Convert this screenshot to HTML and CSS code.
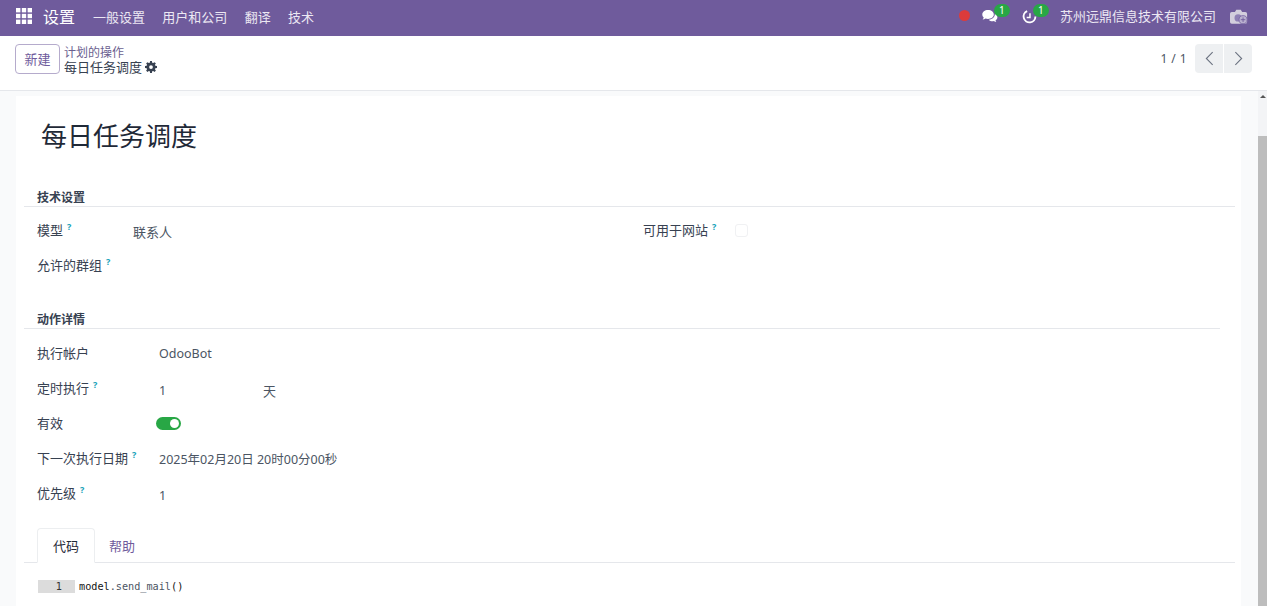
FILE: index.html
```html
<!DOCTYPE html>
<html lang="zh">
<head>
<meta charset="utf-8">
<title>每日任务调度</title>
<link rel="stylesheet" href="styles.css">
</head>
<body>
<header class="navbar">
  <svg class="apps" viewBox="0 0 16 16" width="16" height="16"><g fill="#fff"><rect x="0" y="0" width="4.4" height="4.4"/><rect x="5.8" y="0" width="4.4" height="4.4"/><rect x="11.6" y="0" width="4.4" height="4.4"/><rect x="0" y="5.8" width="4.4" height="4.4"/><rect x="5.8" y="5.8" width="4.4" height="4.4"/><rect x="11.6" y="5.8" width="4.4" height="4.4"/><rect x="0" y="11.6" width="4.4" height="4.4"/><rect x="5.8" y="11.6" width="4.4" height="4.4"/><rect x="11.6" y="11.6" width="4.4" height="4.4"/></g></svg>
  <span class="brand">设置</span>
  <nav class="menu"><span>一般设置</span><span>用户和公司</span><span>翻译</span><span>技术</span></nav>
  <div class="systray">
    <span class="dot"></span>
    <span class="tray-item tray-chat">
      <svg viewBox="0 0 16 15" width="16" height="15"><path fill="#fff" d="M6 1C2.700 1 .3 3 .3 5.500c0 1.200.5 2.200 1.400 3-.1.800-.5 1.400-1.100 1.900 1.100 0 2.100-.3 2.900-.9.800.2 1.600.4 2.500.4 3.300 0 5.800-1.900 5.800-4.400S9.300 1 6 1z"/><path fill="#fff" d="M12.800 4.800c.4 3-2.300 5.600-6 6 .9 1 2.200 1.500 3.600 1.500.5 0 1-.1 1.500-.2.700.6 1.500.9 2.400.9-.4-.5-.7-1-.8-1.600 1.200-.7 1.900-1.800 1.900-2.900 0-1.600-1-2.900-2.600-3.700z"/></svg>
      <span class="count">1</span>
    </span>
    <span class="tray-item tray-clock">
      <svg viewBox="0 0 16 16" width="15" height="15"><path fill="none" stroke="#fff" stroke-width="2" d="M5.500 2.200A6.300 6.300 0 1 0 14.300 8"/><path fill="none" stroke="#fff" stroke-width="1.600" d="M8.500 4.500V9H5"/></svg>
      <span class="count">1</span>
    </span>
    <span class="company">苏州远鼎信息技术有限公司</span>
    <svg class="avatar" viewBox="0 0 20 17" width="18" height="16"><path fill="#d3cedd" d="M2 3h3.500l1.500-2.500h5L13.500 3H17a2 2 0 0 1 2 2v9a2 2 0 0 1-2 2H2a2 2 0 0 1-2-2V5a2 2 0 0 1 2-2z"/><circle cx="9" cy="9.500" r="4" fill="#8f80b5"/><circle cx="14.500" cy="11.500" r="4.500" fill="#b9b0cf" stroke="#7a68a5"/><path stroke="#6f5b9c" d="M14.500 9v5M12 11.500h5"/></svg>
  </div>
</header>

<section class="control">
  <button class="btn-new">新建</button>
  <div class="crumbs">
    <div class="crumb-parent">计划的操作</div>
    <div class="crumb-current">每日任务调度
      <svg viewBox="0 0 16 16" width="12" height="12"><path fill="#374151" fill-rule="evenodd" d="M6.800 0h2.400l.4 2.200 1.300.6 1.900-1.300 1.700 1.700-1.300 1.900.6 1.300 2.200.4v2.400l-2.200.4-.6 1.300 1.300 1.900-1.700 1.700-1.900-1.300-1.300.6-.4 2.200H6.800l-.4-2.200-1.300-.6-1.900 1.300-1.700-1.700 1.300-1.900-.6-1.300L0 9.200V6.800l2.200-.4.6-1.300-1.300-1.900 1.700-1.700 1.900 1.300 1.300-.6zM8 5.500a2.500 2.500 0 1 0 0 5 2.500 2.500 0 0 0 0-5z"/></svg>
    </div>
  </div>
  <div class="pager">
    <span class="pager-text">1 / 1</span>
    <div class="pager-btns">
      <span class="pager-btn"><svg viewBox="0 0 10 16" width="9" height="15"><path fill="none" stroke="#6b7280" stroke-width="1.200" d="M8.500 1L1.500 8l7 7"/></svg></span>
      <span class="pager-btn"><svg viewBox="0 0 10 16" width="9" height="15"><path fill="none" stroke="#6b7280" stroke-width="1.200" d="M1.500 1l7 7-7 7"/></svg></span>
    </div>
  </div>
</section>

<div class="viewport">
  <main class="content">
    <article class="sheet">
      <h1 class="title">每日任务调度</h1>

      <h2 class="sep sep-wide">技术设置</h2>
      <div class="two-col">
        <div class="col">
          <div class="row row-a">
            <label class="label">模型<sup>?</sup></label>
            <span class="value value-low">联系人</span>
          </div>
          <div class="row row-a">
            <label class="label">允许的群组<sup>?</sup></label>
          </div>
        </div>
        <div class="col col-right">
          <div class="row row-a">
            <label class="label">可用于网站<sup>?</sup></label>
            <span class="check"></span>
          </div>
        </div>
      </div>

      <h2 class="sep sep-narrow">动作详情</h2>
      <div class="details">
        <div class="row row-b"><label class="label">执行帐户</label><span class="value">OdooBot</span></div>
        <div class="row row-b"><label class="label">定时执行<sup>?</sup></label><span class="value value-n">1</span><span class="unit">天</span></div>
        <div class="row row-b"><label class="label">有效</label><span class="toggle"><i></i></span></div>
        <div class="row row-b"><label class="label">下一次执行日期<sup>?</sup></label><span class="value">2025年02月20日 20时00分00秒</span></div>
        <div class="row row-b"><label class="label">优先级<sup>?</sup></label><span class="value">1</span></div>
      </div>

      <div class="tabs">
        <span class="tab active">代码</span>
        <span class="tab tab-help">帮助</span>
      </div>
      <div class="code">
        <span class="gutter">1</span><code><b>model</b>.send_mail<b>()</b></code>
      </div>
    </article>
  </main>
  <aside class="scrollbar">
    <span class="arrow"></span>
    <span class="thumb"></span>
  </aside>
</div>
</body>
</html>
```

FILE: styles.css
```css
* { box-sizing: border-box; }
html, body { margin: 0; height: 606px; overflow: hidden; }
body {
  font-family: "Noto Sans", "Noto Sans CJK SC", sans-serif;
  font-size: 13px;
  color: #374151;
  background: #fff;
  display: flex;
  flex-direction: column;
}

.navbar {
  height: 36px;
  flex: none;
  background: #6f5b9c;
  color: #fff;
  display: flex;
  align-items: center;
  padding-left: 16px;
}
.apps { flex: none; margin-top: -5px; }
.brand { font-size: 16px; margin-left: 11px; line-height: 1; margin-top: -2px; }
.menu { display: flex; gap: 17.3px; margin-left: 18px; color: #ece8f3; margin-top: -2px; }
.menu span { line-height: 1; }
.systray { margin-left: auto; display: flex; align-items: center; padding-right: 19px; margin-top: -3px; }
.dot { width: 11px; height: 11px; border-radius: 50%; background: #dc3b3b; margin: -2px 12px 0 0; }
.tray-item { position: relative; display: flex; }
.tray-chat { margin-right: 24px; }
.tray-clock { margin-right: 13px; }
.count {
  position: absolute;
  top: -5px;
  right: -12px;
  min-width: 16px;
  height: 13px;
  padding: 0 3px;
  border-radius: 7px;
  background: #28a745;
  color: #fff;
  font-size: 10px;
  line-height: 13px;
  text-align: center;
}
.company { color: #ece8f3; margin-left: 10px; line-height: 1; }
.avatar { margin-left: 14px; }

.control {
  height: 55px;
  flex: none;
  display: flex;
  align-items: center;
  padding: 0 15px 9px 15px;
  background: #fff;
  border-bottom: 1px solid #e5e7eb;
}
.btn-new {
  width: 45px;
  height: 30px;
  padding: 0;
  font: inherit;
  color: #6f5b9c;
  background: #fff;
  border: 1px solid #b5abcc;
  border-radius: 4px;
}
.crumbs { margin: 2px 0 0 4px; line-height: 15px; }
.crumb-parent { font-size: 12px; color: #6b5f8f; }
.crumb-current { color: #374151; display: flex; align-items: center; gap: 3px; }
.pager { margin-left: auto; display: flex; align-items: center; color: #4b5563; font-size: 12px; }
.pager-text { letter-spacing: .4px; }
.pager-btns { display: flex; gap: 1px; margin-left: 8px; }
.pager-btn {
  width: 28px;
  height: 29px;
  background: #eef0f2;
  display: flex;
  align-items: center;
  justify-content: center;
}
.pager-btn:first-child { border-radius: 4px 0 0 4px; }
.pager-btn:last-child { border-radius: 0 4px 4px 0; }

.viewport { flex: 1; min-height: 0; display: flex; background: #f9fafb; }
.content { flex: 1; min-width: 0; padding: 5px 17px 0 16px; overflow: hidden; }
.sheet {
  height: 600px;
  background: #fff;
  padding: 22px 6px 0 8px;
}
.title {
  font-size: 26px;
  font-weight: 400;
  line-height: 36px;
  color: #1f2937;
  margin: 0 0 0 17px;
}
.sep {
  font-size: 12px;
  font-weight: 700;
  line-height: 17px;
  color: #374151;
  margin: 0;
  padding-left: 13px;
  border-bottom: 1px solid #e5e7eb;
}
.sheet > .sep-wide { margin-top: 35px; }
.sheet > .sep-narrow { margin-right: 15px; }
.two-col { display: grid; grid-template-columns: 606px 1fr; padding-top: 5px; height: 104px; }
.col { padding-left: 13px; }
.row { display: flex; align-items: center; }
.row-a { height: 36px; }
.col:first-child .row-a:last-child { height: 35px; }
.row-a .label { flex: 0 0 96px; margin-top: -1px; }
.col-right .row-a .label { flex-basis: 92px; }
.row-b { height: 35px; padding-left: 13px; }
.row-b .label { flex: 0 0 122px; margin-top: -1px; }
.details { padding-top: 7px; }
.label { line-height: 18px; color: #374151; }
sup {
  color: #17a2b8;
  font-size: 9px;
  line-height: 0;
  font-weight: 700;
  margin-left: 4px;
  vertical-align: 5px;
}
.value { color: #4b5563; font-size: 12.5px; }
.value-low { font-size: 13px; color: #4b5563; margin-top: 3px; }
.value-n { flex: 0 0 104px; margin-top: 3px; }
.row-b:last-child .value { margin-top: 3px; }
.unit { font-size: 13px; color: #4b5563; margin-top: 3px; }
.check {
  width: 13px;
  height: 13px;
  border: 1px solid #f0f1f3;
  border-radius: 3px;
}
.toggle {
  width: 25px;
  height: 13px;
  border-radius: 7px;
  background: #28a745;
  margin-left: -3px;
  display: flex;
  justify-content: flex-end;
  align-items: center;
  padding-right: 2px;
}
.toggle i { width: 9px; height: 9px; border-radius: 50%; background: #fff; }

.tabs { display: flex; margin-top: 17px; padding-left: 13px; border-bottom: 1px solid #e5e7eb; height: 35px; }
.tab {
  width: 58px;
  height: 35px;
  line-height: 36px;
  text-align: center;
  color: #6f5b9c;
}
.tab-help { width: 54px; }
.tab.active {
  color: #1f2937;
  background: #fff;
  border: 1px solid #eceef0;
  border-bottom-color: #fff;
  border-radius: 4px 4px 0 0;
  line-height: 35px;
}
.code {
  display: flex;
  align-items: center;
  margin-top: 17px;
  padding-left: 14px;
  height: 13px;
  font-family: "DejaVu Sans Mono", "Liberation Mono", monospace;
  font-size: 10.2px;
}
.gutter {
  width: 37px;
  height: 13px;
  line-height: 13px;
  background: #dcdcdc;
  color: #333;
  text-align: right;
  padding-right: 13px;
  flex: none;
}
code { font: inherit; margin-left: 4px; color: #4b5563; }
code b { font-weight: 400; color: #111; }

.scrollbar { width: 9px; flex: none; background: #f3f4f6; position: relative; display: flex; flex-direction: column; align-items: center; }
.arrow { width: 0; height: 0; margin-top: 4px; border: 3px solid transparent; border-top: 0; border-bottom: 3px solid #555; }
.thumb { position: absolute; left: 0; right: 0; top: 45px; bottom: 0; background: #bdbdbd; }
```
